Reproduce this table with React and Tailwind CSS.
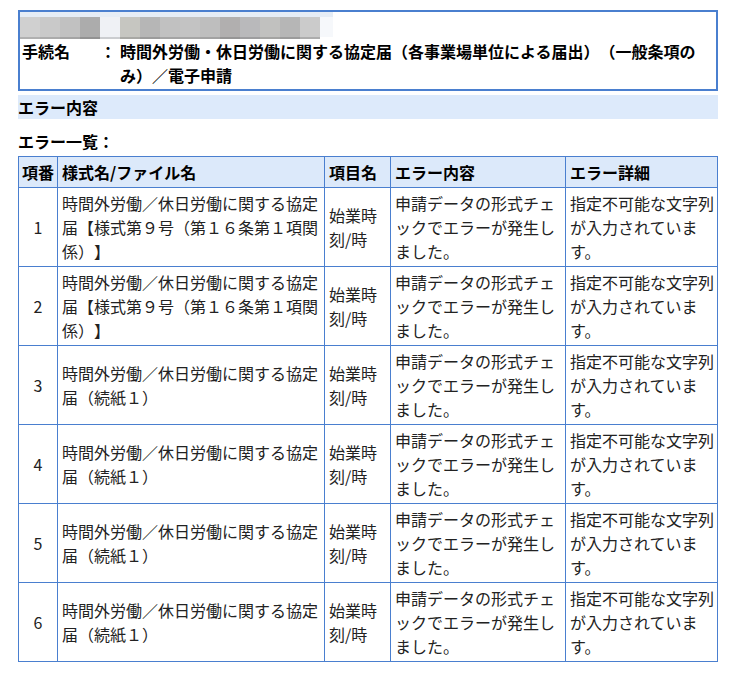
import React from "react";

const blocks = [
  "#d0d0d0", "#c9c9c9", "#c1c1c1", "#acacac", "#eff1f5", "#c6c6c1", "#b6b6b6",
  "#c1c1c1", "#c3c3c3", "#bebebe", "#b1afaf", "#b9b9bb", "#c1c1bf", "#b6b6b6", "#cbcbcb",
];

const longName = ["時間外労働／休日労働に関する協定", "届【様式第９号（第１６条第１項関", "係）】"];
const shortName = ["時間外労働／休日労働に関する協定", "届（続紙１）"];
const rows = [
  { n: 1, name: longName },
  { n: 2, name: longName },
  { n: 3, name: shortName },
  { n: 4, name: shortName },
  { n: 5, name: shortName },
  { n: 6, name: shortName },
];

function Lines({ lines }) {
  return (
    <div>
      {lines.map((l, i) => (
        <div key={i} className="whitespace-nowrap">{l}</div>
      ))}
    </div>
  );
}

export default function App() {
  return (
    <div className="bg-white min-h-[677px] pt-[10px] pl-[18px] font-['Noto_Sans_CJK_JP',sans-serif] text-[16px] leading-[24px] text-[#222] [text-spacing-trim:space-all]">
      <div className="w-[700px]">
        {/* top box */}
        <div className="border-2 border-[#4a7fcf] pb-[2px]">
          <div className="flex h-[27px]">
            {blocks.map((c, i) => (
              <div key={i} className="w-[20px] flex flex-col">
                <div className="h-[5px] bg-[#e6edf6]" />
                <div className="h-[20px]" style={{ background: c }} />
                <div className="h-[2px]" style={{ background: c, filter: "brightness(0.85)" }} />
              </div>
            ))}
            <div className="w-[13px] flex flex-col">
              <div className="h-[5px] bg-[#e6edf6]" />
              <div className="h-[20px] bg-[#f6f8fb]" />
            </div>
          </div>
          <div className="flex font-bold text-black">
            <div className="w-[80px] pl-[2px]">手続名</div>
            <div className="w-[16px] text-center">：</div>
            <div className="pl-[4px]">
              <div className="whitespace-nowrap">時間外労働・休日労働に関する協定届（各事業場単位による届出）（一般条項の</div>
              <div>み）／電子申請</div>
            </div>
          </div>
        </div>

        <div className="mt-[4px] bg-[#ddeafb] font-bold text-black h-[24px]">エラー内容</div>

        <div className="mt-[10px] font-bold text-black">エラー一覧：</div>

        <div className="mt-[3px] grid grid-cols-[38px_266px_65px_174px_151px] gap-px bg-[#4a7fcf] p-px">
          {["項番", "様式名/ファイル名", "項目名", "エラー内容", "エラー詳細"].map((h, i) => (
            <div
              key={h}
              className={
                "bg-[#dce9fa] font-bold text-black py-[3px] whitespace-nowrap " +
                (i === 0 ? "text-center" : "pl-[4px]")
              }
            >
              {h}
            </div>
          ))}
          {rows.map((r) => (
            <React.Fragment key={r.n}>
              <div className="bg-white flex items-center justify-center py-[3px]">{r.n}</div>
              <div className="bg-white flex items-center px-[4px] py-[3px]">
                <Lines lines={r.name} />
              </div>
              <div className="bg-white flex items-center px-[4px] py-[3px]">
                <Lines lines={["始業時", "刻/時"]} />
              </div>
              <div className="bg-white flex items-center px-[4px] py-[3px]">
                <Lines lines={["申請データの形式チェ", "ックでエラーが発生し", "ました。"]} />
              </div>
              <div className="bg-white flex items-center px-[4px] py-[3px]">
                <Lines lines={["指定不可能な文字列", "が入力されていま", "す。"]} />
              </div>
            </React.Fragment>
          ))}
        </div>
      </div>
    </div>
  );
}
